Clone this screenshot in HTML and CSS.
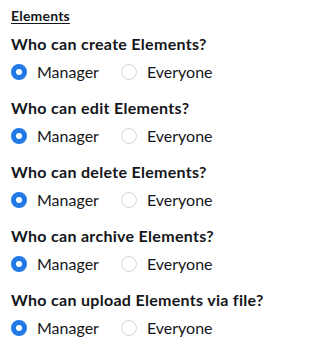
FILE: index.html
```html
<!DOCTYPE html>
<html lang="en">
<head>
  <meta charset="UTF-8" />
  <title>Permissions</title>
  <link rel="stylesheet" href="styles.css">
</head>
<body>
<div class="settings">
  <h3 class="section-title">Elements</h3>

  <div class="group">
    <h4>Who can create Elements?</h4>
    <div class="options">
      <label><span class="radio checked"></span>Manager</label>
      <label><span class="radio"></span>Everyone</label>
    </div>
  </div>

  <div class="group">
    <h4>Who can edit Elements?</h4>
    <div class="options">
      <label><span class="radio checked"></span>Manager</label>
      <label><span class="radio"></span>Everyone</label>
    </div>
  </div>

  <div class="group">
    <h4>Who can delete Elements?</h4>
    <div class="options">
      <label><span class="radio checked"></span>Manager</label>
      <label><span class="radio"></span>Everyone</label>
    </div>
  </div>

  <div class="group">
    <h4>Who can archive Elements?</h4>
    <div class="options">
      <label><span class="radio checked"></span>Manager</label>
      <label><span class="radio"></span>Everyone</label>
    </div>
  </div>

  <div class="group">
    <h4>Who can upload Elements via file?</h4>
    <div class="options">
      <label><span class="radio checked"></span>Manager</label>
      <label><span class="radio"></span>Everyone</label>
    </div>
  </div>
</div>
</body>
</html>
```

FILE: styles.css
```css
body {
  font-family: 'Lato', sans-serif;
  margin: 0;
  padding: 0;
  background: #fff;
  color: #14161a;
}

.settings {
  padding: 8px 11px;
}

.section-title {
  font-size: 14px;
  font-weight: 700;
  letter-spacing: 0.2px;
  text-decoration: underline;
  text-underline-offset: 2px;
  margin: 0 0 10px;
  line-height: 16px;
}

.group {
  margin-bottom: 15px;
}

.group h4 {
  font-size: 16px;
  font-weight: 700;
  letter-spacing: 0.3px;
  margin: 0 0 7px;
  line-height: 20px;
}

.options {
  display: flex;
  gap: 22px;
}

.options label {
  display: flex;
  align-items: center;
  gap: 10px;
  font-size: 16px;
  line-height: 22px;
}

.radio {
  width: 16px;
  height: 16px;
  border-radius: 50%;
  border: 1px solid #d4d6da;
  box-sizing: border-box;
  background: #fff;
}

.radio.checked {
  border: 5px solid #1f78e6;
}
```
